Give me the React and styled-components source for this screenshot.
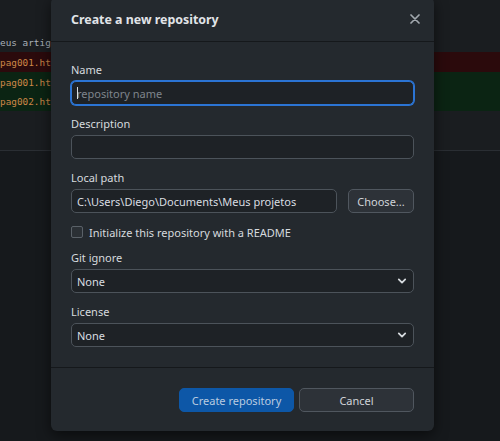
import React from "react";
import styled, { createGlobalStyle } from "styled-components";

const GlobalStyle = createGlobalStyle`
  html, body {
    margin: 0;
    padding: 0;
    background: #16191c;
  }
  * {
    box-sizing: border-box;
  }
`;

const Page = styled.div`
  position: relative;
  width: 500px;
  height: 441px;
  overflow: hidden;
  background: #16191c;
  font-family: "Noto Sans", "Open Sans", sans-serif;
`;

const DiffView = styled.div`
  display: flex;
  flex-direction: column;
  height: 100%;
`;

const DiffTop = styled.div`
  display: flex;
  flex-direction: column;
  padding-top: 33px;
  height: 151px;
  background: #1a1d20;
  border-bottom: 1px solid #2a2e33;
`;

const DiffLine = styled.div`
  height: ${(p) => p.h || 20}px;
  display: flex;
  align-items: center;
  font-family: "DejaVu Sans Mono", "Liberation Mono", monospace;
  font-size: 9.4px;
  white-space: pre;
  color: ${(p) => (p.kind ? "#cc8747" : "#a9b0b8")};
  background: ${(p) =>
    p.kind === "del" ? "#2b0a0c" : p.kind === "add" ? "#0b2413" : "transparent"};
`;

const Backdrop = styled.div`
  flex: 1;
  background: #16191c;
`;

const Dialog = styled.div`
  position: absolute;
  left: 51px;
  top: -3px;
  width: 383px;
  background: #24292e;
  border-radius: 6px;
  box-shadow: 0 4px 14px rgba(0, 0, 0, 0.55);
  color: #d6dade;
  display: flex;
  flex-direction: column;
`;

const Header = styled.div`
  height: 45px;
  padding: 0 12px 0 20px;
  display: flex;
  align-items: center;
  justify-content: space-between;
  border-bottom: 1px solid #15181b;
`;

const Title = styled.h1`
  margin: 0;
  font-size: 12.4px;
  font-weight: 700;
  color: #e1e4e8;
`;

const CloseButton = styled.button`
  background: none;
  border: none;
  padding: 0;
  width: 14px;
  height: 14px;
  display: flex;
  align-items: center;
  justify-content: center;
  color: #a2a8ae;
`;

const Body = styled.div`
  padding: 21px 20px 20px;
  display: flex;
  flex-direction: column;
  gap: 12px;
`;

const Field = styled.div`
  display: flex;
  flex-direction: column;
  gap: 4px;
`;

const Label = styled.label`
  font-size: 11px;
  line-height: 14px;
  color: #d6dade;
`;

const InputWrap = styled.div`
  position: relative;
  flex: 1;
  display: flex;
`;

const TextInput = styled.input`
  width: 100%;
  height: 24px;
  padding: 0 5px;
  background: #1e2226;
  border: 1px solid ${(p) => (p.focused ? "#2b74d4" : "#4c535a")};
  box-shadow: ${(p) => (p.focused ? "0 0 0 1px #2b74d4" : "none")};
  border-radius: 5px;
  outline: none;
  font-family: inherit;
  font-size: 11px;
  color: #d9dde1;
  &::placeholder {
    color: #7e858c;
  }
`;

const Caret = styled.span`
  position: absolute;
  left: 6px;
  top: 6px;
  width: 1px;
  height: 12px;
  background: #d9dde1;
`;

const Row = styled.div`
  display: flex;
  gap: 11px;
`;

const Button = styled.button`
  height: 24px;
  min-width: ${(p) => p.w || 0}px;
  padding: 0 8px;
  border-radius: 5px;
  font-family: inherit;
  font-size: 11px;
  color: ${(p) => (p.primary ? "#b9cbe0" : "#d0d4d8")};
  background: ${(p) => (p.primary ? "#0d57a7" : "#2d3238")};
  border: 1px solid ${(p) => (p.primary ? "#0d57a7" : "#50575f")};
`;

const CheckRow = styled.label`
  display: flex;
  align-items: center;
  gap: 6px;
  height: 14px;
  font-size: 11px;
  color: #d6dade;
`;

const CheckBox = styled.span`
  width: 12px;
  height: 12px;
  border: 1px solid #5a6168;
  border-radius: 2px;
  background: #2b3035;
`;

const SelectBox = styled.div`
  height: 24px;
  padding: 0 6px 0 5px;
  background: #1e2226;
  border: 1px solid #4c535a;
  border-radius: 5px;
  display: flex;
  align-items: center;
  justify-content: space-between;
  font-size: 11px;
  color: #d9dde1;
`;

const Footer = styled.div`
  border-top: 1px solid #15181b;
  padding: 20px 20px 19px;
  display: flex;
  justify-content: flex-end;
  gap: 5px;
`;

const Chevron = () => (
  <svg width="10" height="10" viewBox="0 0 10 10">
    <path d="M1.8 3.4 L5 6.6 L8.2 3.4" fill="none" stroke="#d6dade" strokeWidth="1.8" strokeLinecap="round" strokeLinejoin="round" />
  </svg>
);

function Select({ value }) {
  return (
    <SelectBox>
      <span>{value}</span>
      <Chevron />
    </SelectBox>
  );
}

export default function App() {
  return (
    <Page>
      <GlobalStyle />
      <DiffView>
        <DiffTop>
          <DiffLine h={19}>eus artigos/</DiffLine>
          <DiffLine kind="del">pag001.html</DiffLine>
          <DiffLine kind="add">pag001.html</DiffLine>
          <DiffLine kind="add" h={19}>pag002.html</DiffLine>
        </DiffTop>
        <Backdrop />
      </DiffView>

      <Dialog>
        <Header>
          <Title>Create a new repository</Title>
          <CloseButton aria-label="Close">
            <svg width="10" height="10" viewBox="0 0 10 10">
              <path d="M1 1 L9 9 M9 1 L1 9" stroke="currentColor" strokeWidth="1.7" strokeLinecap="round" />
            </svg>
          </CloseButton>
        </Header>
        <Body>
          <Field>
            <Label>Name</Label>
            <InputWrap>
              <TextInput focused placeholder="repository name" />
              <Caret />
            </InputWrap>
          </Field>
          <Field>
            <Label>Description</Label>
            <TextInput />
          </Field>
          <Field>
            <Label>Local path</Label>
            <Row>
              <InputWrap>
                <TextInput defaultValue="C:\Users\Diego\Documents\Meus projetos" />
              </InputWrap>
              <Button w={66}>Choose...</Button>
            </Row>
          </Field>
          <CheckRow>
            <CheckBox />
            Initialize this repository with a README
          </CheckRow>
          <Field>
            <Label>Git ignore</Label>
            <Select value="None" />
          </Field>
          <Field>
            <Label>License</Label>
            <Select value="None" />
          </Field>
        </Body>
        <Footer>
          <Button primary w={115}>Create repository</Button>
          <Button w={115}>Cancel</Button>
        </Footer>
      </Dialog>
    </Page>
  );
}
